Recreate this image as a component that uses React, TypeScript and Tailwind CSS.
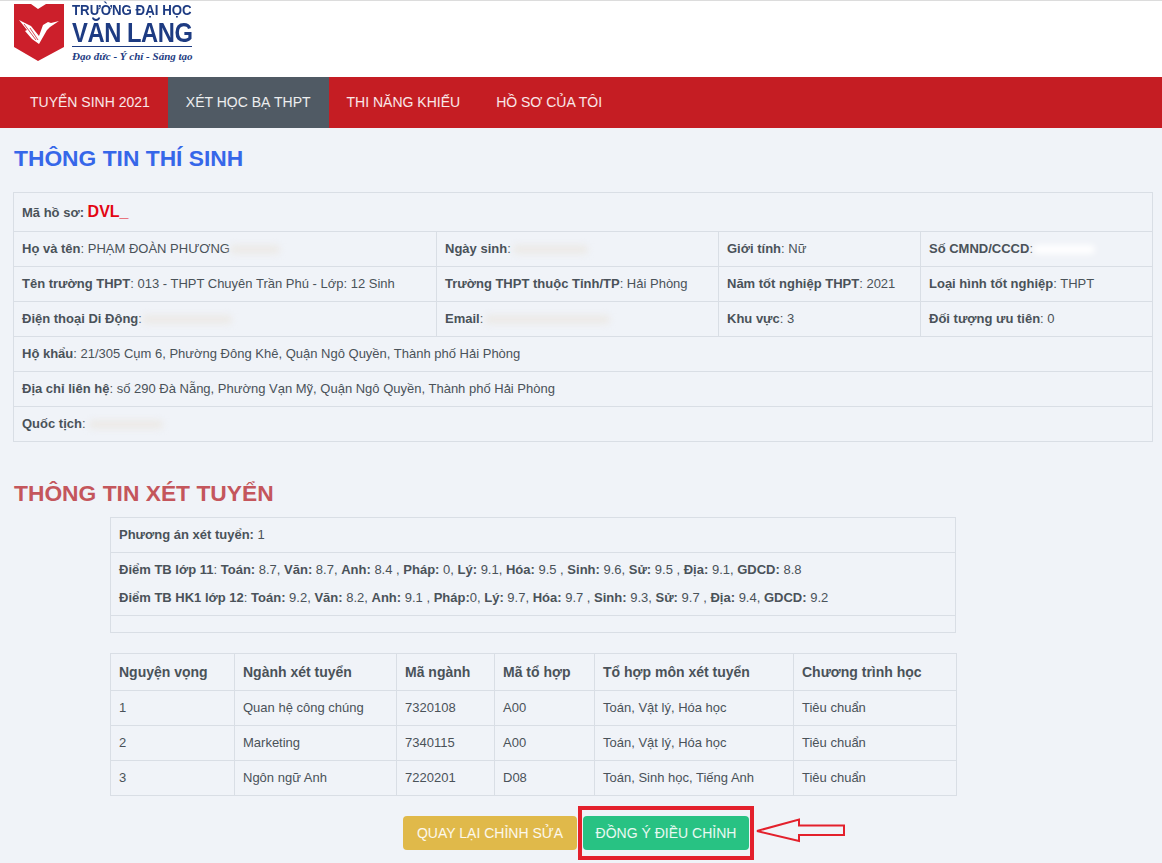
const Blur = ({ w, cls = "" }: { w: number; cls?: string }) => (
  <span className={"inline-block h-[9px] align-middle rounded-full bg-[#eceae7] blur-[3px] " + cls} style={{ width: w }} />
);

const cell = "border border-[#d9dee5] px-2 align-middle text-[13px]";

export default function App() {
  return (
    <div className="min-h-[863px] bg-[#f0f3f8] text-[14px] text-[#4a5259] font-['Liberation_Sans',Arial,sans-serif] relative overflow-hidden">
      <header className="h-[77px] bg-white border-t border-[#dcdcdc] flex pl-[14px] pt-[2px] gap-[8px]">
        <svg width="50" height="58" viewBox="0 0 50 58" className="shrink-0">
          <path d="M0 1 H17 L24 6 L32 1 H50 V44 L24 58 L0 44 Z" fill="#cc1f2b" />
          <path d="M5 17 L17 23 L25 33 L29 22 L34 19 L37 20 L45 18 L36 24 L33 27 L25 41 L18 36 L11 28 L13 27 Z" fill="#fff" />
          <path d="M10 21 L22 37 M16 25 L24 37" stroke="#cc1f2b" strokeWidth="0.8" fill="none" />
        </svg>
        <div className="flex flex-col w-[120px] text-[#1d3b82] leading-none">
          <div className="text-[14.5px] leading-[15px] font-bold whitespace-nowrap origin-left scale-x-[.915]">TRƯỜNG ĐẠI HỌC</div>
          <div className="text-[27px] leading-[25px] font-bold whitespace-nowrap mt-[3px] origin-left scale-x-[.88] tracking-[-0.5px]">VĂN LANG</div>
          <div className="border-t border-[#1d3b82] pt-[3px] text-[11px] leading-[13px] font-bold italic font-['Liberation_Serif',serif] whitespace-nowrap">Đạo đức - Ý chí - Sáng tạo</div>
        </div>
      </header>

      <nav className="h-[51px] bg-[#c51d23] flex pl-[12px] text-white/90">
        {["TUYỂN SINH 2021", "XÉT HỌC BẠ THPT", "THI NĂNG KHIẾU", "HỒ SƠ CỦA TÔI"].map((t, i) => (
          <a key={t} className={"flex items-center px-[18px] whitespace-nowrap " + (i === 1 ? "bg-[#505a64]" : "")}>{t}</a>
        ))}
      </nav>

      <main className="px-[13px]">
        <h2 className="text-[22.8px] leading-[28px] font-bold text-[#3667e9] mt-[16px] mb-[20px] pl-[1px]">THÔNG TIN THÍ SINH</h2>
        <table className="w-[1139px] table-fixed border-collapse">
          <colgroup>
            <col className="w-[423px]" />
            <col className="w-[282px]" />
            <col className="w-[202px]" />
            <col className="w-[232px]" />
          </colgroup>
          <tbody>
            <tr className="h-[39px]">
              <td colSpan={4} className={cell}><b>Mã hồ sơ:</b> <b className="text-[16px] text-[#e30613]">DVL_</b></td>
            </tr>
            <tr className="h-[35px]">
              <td className={cell}><b>Họ và tên</b>: PHẠM ĐOÀN PHƯƠNG<Blur w={50} /></td>
              <td className={cell}><b>Ngày sinh</b>:<Blur w={75} cls="ml-[2px]" /></td>
              <td className={cell}><b>Giới tính</b>: Nữ</td>
              <td className={cell}><b>Số CMND/CCCD</b>:<Blur w={62} cls="bg-white" /></td>
            </tr>
            <tr className="h-[35px]">
              <td className={cell}><b>Tên trường THPT</b>: 013 - THPT Chuyên Trần Phú - Lớp: 12 Sinh</td>
              <td className={cell}><b>Trường THPT thuộc Tỉnh/TP</b>: Hải Phòng</td>
              <td className={cell}><b>Năm tốt nghiệp THPT</b>: 2021</td>
              <td className={cell}><b>Loại hình tốt nghiệp</b>: THPT</td>
            </tr>
            <tr className="h-[35px]">
              <td className={cell}><b>Điện thoại Di Động</b>:<Blur w={90} /></td>
              <td className={cell}><b>Email</b>:<Blur w={125} cls="ml-[2px]" /></td>
              <td className={cell}><b>Khu vực</b>: 3</td>
              <td className={cell}><b>Đối tượng ưu tiên</b>: 0</td>
            </tr>
            <tr className="h-[35px]">
              <td colSpan={4} className={cell}><b>Hộ khẩu</b>: 21/305 Cụm 6, Phường Đông Khê, Quận Ngô Quyền, Thành phố Hải Phòng</td>
            </tr>
            <tr className="h-[35px]">
              <td colSpan={4} className={cell}><b>Địa chỉ liên hệ</b>: số 290 Đà Nẵng, Phường Vạn Mỹ, Quận Ngô Quyền, Thành phố Hải Phòng</td>
            </tr>
            <tr className="h-[35px]">
              <td colSpan={4} className={cell}><b>Quốc tịch</b>:<Blur w={74} cls="ml-[3px]" /></td>
            </tr>
          </tbody>
        </table>

        <h2 className="text-[22.8px] leading-[28px] font-bold text-[#c4565c] mt-[37px] mb-[10px] pl-[1px]">THÔNG TIN XÉT TUYỂN</h2>

        <div className="w-[846px] ml-[97px]">
          <table className="w-full table-fixed border-collapse">
            <tbody>
              <tr className="h-[35px]"><td className={cell}><b>Phương án xét tuyển:</b> 1</td></tr>
              <tr className="h-[63px]">
                <td className={cell + " leading-[28px]"}>
                  <div><b>Điểm TB lớp 11</b>: <b>Toán:</b> 8.7, <b>Văn:</b> 8.7, <b>Anh:</b> 8.4 , <b>Pháp:</b> 0, <b>Lý:</b> 9.1, <b>Hóa:</b> 9.5 , <b>Sinh:</b> 9.6, <b>Sử:</b> 9.5 , <b>Địa:</b> 9.1, <b>GDCD:</b> 8.8</div>
                  <div><b>Điểm TB HK1 lớp 12</b>: <b>Toán:</b> 9.2, <b>Văn:</b> 8.2, <b>Anh:</b> 9.1 , <b>Pháp:</b>0, <b>Lý:</b> 9.7, <b>Hóa:</b> 9.7 , <b>Sinh:</b> 9.3, <b>Sử:</b> 9.7 , <b>Địa:</b> 9.4, <b>GDCD:</b> 9.2</div>
                </td>
              </tr>
              <tr className="h-[17px]"><td className={cell}></td></tr>
            </tbody>
          </table>

          <table className="w-full table-fixed border-collapse mt-[20px]">
            <colgroup>
              <col className="w-[124px]" />
              <col className="w-[162px]" />
              <col className="w-[98px]" />
              <col className="w-[100px]" />
              <col className="w-[199px]" />
              <col className="w-[163px]" />
            </colgroup>
            <thead>
              <tr className="h-[37px] font-bold text-left">
                {["Nguyện vọng", "Ngành xét tuyển", "Mã ngành", "Mã tổ hợp", "Tổ hợp môn xét tuyển", "Chương trình học"].map((h) => (
                  <th key={h} className="border border-[#d9dee5] px-2 align-middle text-[14px]">{h}</th>
                ))}
              </tr>
            </thead>
            <tbody>
              {[
                ["1", "Quan hệ công chúng", "7320108", "A00", "Toán, Vật lý, Hóa học", "Tiêu chuẩn"],
                ["2", "Marketing", "7340115", "A00", "Toán, Vật lý, Hóa học", "Tiêu chuẩn"],
                ["3", "Ngôn ngữ Anh", "7220201", "D08", "Toán, Sinh học, Tiếng Anh", "Tiêu chuẩn"],
              ].map((r) => (
                <tr key={r[0]} className="h-[35px]">
                  {r.map((c, i) => <td key={i} className={cell}>{c}</td>)}
                </tr>
              ))}
            </tbody>
          </table>
        </div>

        <div className="flex justify-start pl-[390px] mt-[20px] gap-[6px] text-white/90">
          <button className="w-[174px] h-[34px] rounded-[4px] bg-[#e0b94a]">QUAY LẠI CHỈNH SỬA</button>
          <button className="w-[166px] h-[34px] rounded-[4px] bg-[#28c283]">ĐỒNG Ý ĐIỀU CHỈNH</button>
        </div>
      </main>

      <div className="absolute left-[578px] top-[806px] w-[176px] h-[54px] border-[4px] border-[#e3202c]" />
      <svg className="absolute left-[750px] top-[812px]" width="100" height="36" viewBox="750 812 100 36">
        <path d="M757 831 L799 819.5 V825.5 H844 V835 H799 V841 Z" fill="none" stroke="#e3202c" strokeWidth="2" />
      </svg>
    </div>
  );
}
